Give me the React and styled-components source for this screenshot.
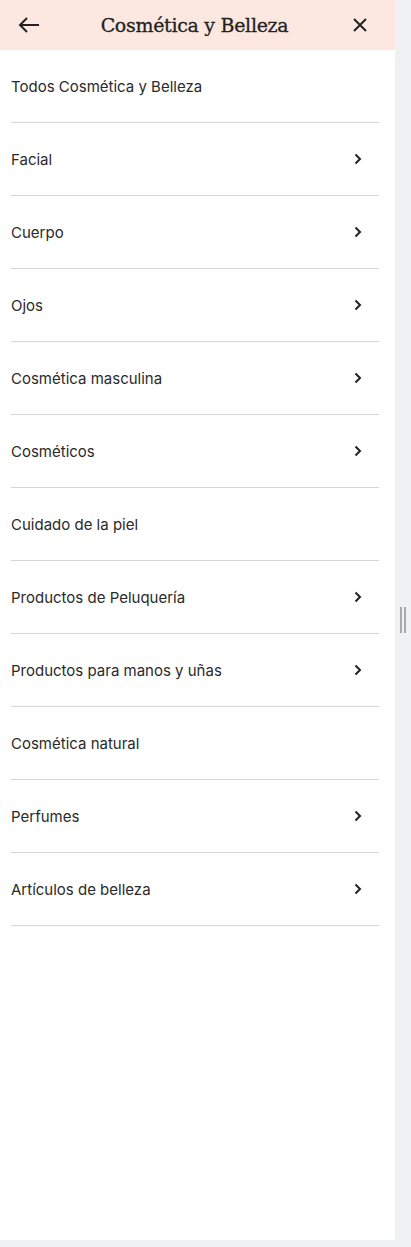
import styled, { createGlobalStyle } from "styled-components";

const GlobalStyle = createGlobalStyle`
  html, body {
    margin: 0;
    padding: 0;
    background: #f0f1f3;
  }
`;

const StyledPage = styled.div`
  width: 411px;
  height: 1247px;

  display: grid;
  grid-template-columns: 395px 16px;
  grid-template-rows: 1240px 7px;

  background: #f0f1f3;
`;

const StyledPanel = styled.div`
  display: flex;
  flex-direction: column;

  background: #ffffff;
`;

const StyledHeader = styled.header`
  height: 50px;
  padding: 0 22px 0 18px;

  display: flex;
  align-items: center;
  justify-content: space-between;

  background: #fce8e1;
`;

const StyledTitle = styled.h1`
  margin: 0 0 0 2px;

  font-family: "DejaVu Serif", "Liberation Serif", serif;
  font-size: 19px;
  font-weight: 400;
  letter-spacing: -0.3px;
  color: #222222;
  -webkit-text-stroke: 0.3px #222222;
`;

const StyledIconButton = styled.button`
  width: ${(props) => props.$size}px;
  height: 24px;
  padding: 0;

  display: flex;
  align-items: center;
  justify-content: center;

  border: none;
  background: none;
  color: #222222;
`;

const StyledList = styled.ul`
  margin: 0;
  padding: 0 16px 0 11px;

  list-style: none;
`;

const StyledItem = styled.li`
  height: 72px;
  padding-right: 16px;

  display: flex;
  align-items: center;
  justify-content: space-between;

  border-bottom: 1px solid #d6d6d6;

  font-family: Inter, "Liberation Sans", sans-serif;
  font-size: 15px;
  color: #2a2a2a;
`;

const StyledGutter = styled.div`
  display: flex;
  align-items: center;
  justify-content: center;
  gap: 2px;
`;

const StyledGrip = styled.span`
  width: 2px;
  height: 26px;

  background: #a9a9a9;
`;

const items = [
  { label: "Todos Cosmética y Belleza", more: false },
  { label: "Facial", more: true },
  { label: "Cuerpo", more: true },
  { label: "Ojos", more: true },
  { label: "Cosmética masculina", more: true },
  { label: "Cosméticos", more: true },
  { label: "Cuidado de la piel", more: false },
  { label: "Productos de Peluquería", more: true },
  { label: "Productos para manos y uñas", more: true },
  { label: "Cosmética natural", more: false },
  { label: "Perfumes", more: true },
  { label: "Artículos de belleza", more: true },
];

const Chevron = () => (
  <svg width="10" height="12" viewBox="0 0 10 12" fill="none">
    <path d="M2.5 1.5 L7 6 L2.5 10.5" stroke="#222" strokeWidth="2" />
  </svg>
);

const App = () => (
  <>
    <GlobalStyle />
    <StyledPage>
      <StyledPanel>
        <StyledHeader>
          <StyledIconButton $size={22} aria-label="Volver">
            <svg width="22" height="16" viewBox="0 0 22 16" fill="none">
              <path
                d="M21 8 H2 M9 1 L2 8 L9 15"
                stroke="#222"
                strokeWidth="2"
              />
            </svg>
          </StyledIconButton>
          <StyledTitle>Cosmética y Belleza</StyledTitle>
          <StyledIconButton $size={26} aria-label="Cerrar">
            <svg width="14" height="14" viewBox="0 0 14 14" fill="none">
              <path d="M1 1 L13 13 M13 1 L1 13" stroke="#222" strokeWidth="2" />
            </svg>
          </StyledIconButton>
        </StyledHeader>

        <StyledList>
          {items.map((item) => (
            <StyledItem key={item.label}>
              {item.label}
              {item.more && <Chevron />}
            </StyledItem>
          ))}
        </StyledList>
      </StyledPanel>

      <StyledGutter>
        <StyledGrip />
        <StyledGrip />
      </StyledGutter>
    </StyledPage>
  </>
);

export default App;
